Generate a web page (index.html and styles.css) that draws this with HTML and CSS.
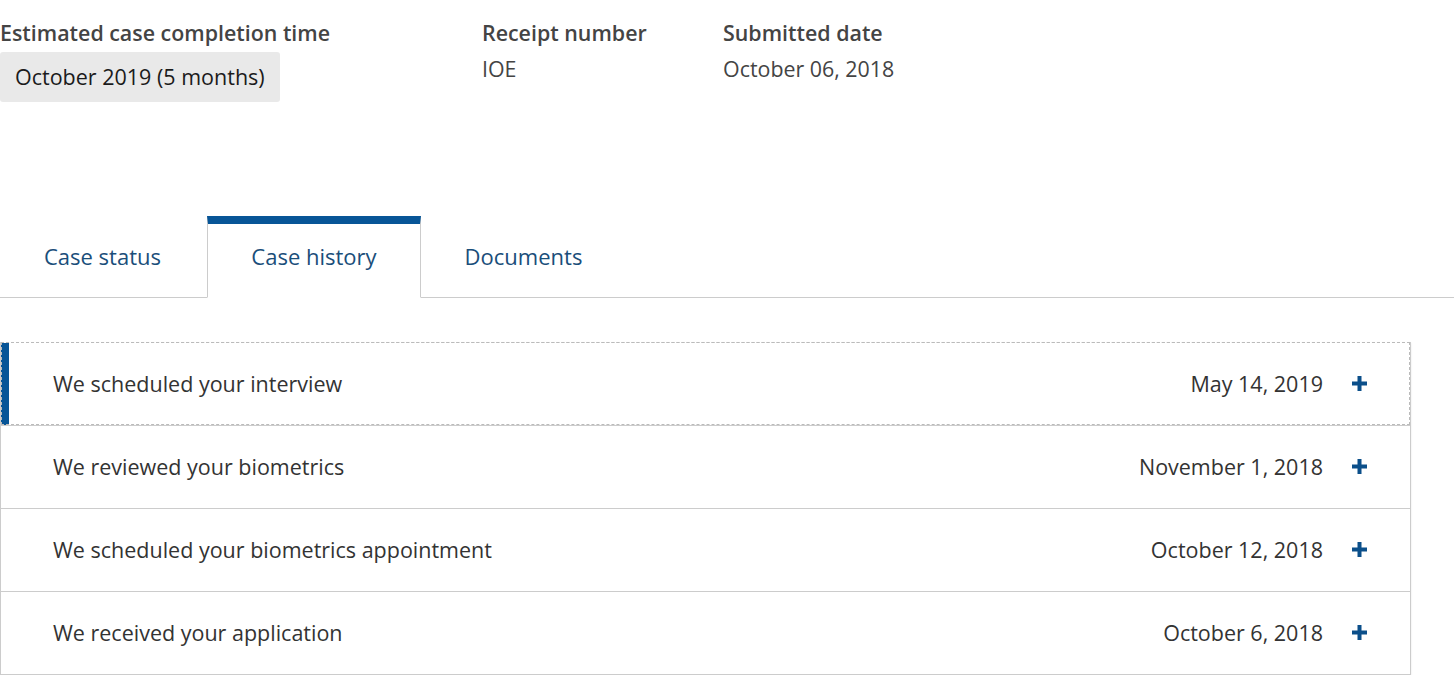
FILE: index.html
```html
<!DOCTYPE html>
<html lang="en">
<head>
    <meta charset="UTF-8">
    <meta name="viewport" content="width=device-width, initial-scale=1.0">
    <title>Case history</title>
    <link rel="stylesheet" href="styles.css">
</head>
<body>
    <div class="summary">
        <div class="field field-estimate">
            <div class="label">Estimated case completion time</div>
            <div class="estimate">October 2019 (5 months)</div>
        </div>
        <div class="field field-receipt">
            <div class="label">Receipt number</div>
            <div class="value">IOE</div>
        </div>
        <div class="field">
            <div class="label">Submitted date</div>
            <div class="value">October 06, 2018</div>
        </div>
    </div>

    <div class="tabs">
        <div class="tab">Case status</div>
        <div class="tab active">Case history</div>
        <div class="tab">Documents</div>
    </div>

    <div class="history">
        <div class="row current">
            <span class="title">We scheduled your interview</span>
            <span class="date">May 14, 2019</span>
            <span class="plus"><svg width="15" height="15" viewBox="0 0 15 15"><path d="M7.5 0v15M0 7.5h15" stroke="#0b4f8a" stroke-width="4"/></svg></span>
        </div>
        <div class="row">
            <span class="title">We reviewed your biometrics</span>
            <span class="date">November 1, 2018</span>
            <span class="plus"><svg width="15" height="15" viewBox="0 0 15 15"><path d="M7.5 0v15M0 7.5h15" stroke="#0b4f8a" stroke-width="4"/></svg></span>
        </div>
        <div class="row">
            <span class="title">We scheduled your biometrics appointment</span>
            <span class="date">October 12, 2018</span>
            <span class="plus"><svg width="15" height="15" viewBox="0 0 15 15"><path d="M7.5 0v15M0 7.5h15" stroke="#0b4f8a" stroke-width="4"/></svg></span>
        </div>
        <div class="row">
            <span class="title">We received your application</span>
            <span class="date">October 6, 2018</span>
            <span class="plus"><svg width="15" height="15" viewBox="0 0 15 15"><path d="M7.5 0v15M0 7.5h15" stroke="#0b4f8a" stroke-width="4"/></svg></span>
        </div>
    </div>
</body>
</html>
```

FILE: styles.css
```css
body {
    margin: 0;
    font-family: "Open Sans", "Lato", sans-serif;
    color: #333;
    background: #fff;
}

.summary {
    display: flex;
    padding-top: 20px;
}

.field-estimate {
    width: 482px;
}

.field-receipt {
    width: 241px;
}

.label {
    font-size: 21.4px;
    font-weight: 600;
    color: #444;
    line-height: 26px;
}

.value {
    font-size: 21.4px;
    color: #444;
    line-height: 26px;
    margin-top: 10px;
}

.estimate {
    display: inline-block;
    margin-top: 6px;
    background: #e9e9e9;
    border-radius: 3px;
    padding: 12px 15px;
    font-size: 21.5px;
    line-height: 26px;
    color: #1b1b1b;
}

.tabs {
    display: flex;
    margin-top: 114px;
    border-bottom: 1px solid #ccc;
}

.tab {
    height: 65px;
    padding-bottom: 8px;
    margin-top: 8px;
    line-height: 65px;
    text-align: center;
    font-size: 22px;
    color: #1a4e7a;
    width: 205px;
    margin-bottom: -1px;
}

.active {
    width: 212px;
    margin-left: 2px;
    margin-top: 0;
    border-top: 8px solid #075597;
    border-left: 1px solid #ccc;
    border-right: 1px solid #ccc;
    border-bottom: 1px solid #fff;
    background: #fff;
}

.history {
    margin-top: 44px;
    width: 1409px;
    border: 1px solid #ccc;
    border-top: none;
    box-shadow: 0 1px 2px rgba(0, 0, 0, 0.1);
}

.row {
    display: flex;
    align-items: center;
    border-top: 1px solid #ccc;
    padding-left: 52px;
    padding-bottom: 2px;
    box-sizing: border-box;
    height: 83px;
    font-size: 21.5px;
    color: #333;
}

.row.current {
    border-top: 1px dashed #bbb;
    box-shadow: inset 8px 0 0 #075597;
    outline: 1px dashed #bbb;
    outline-offset: -1px;
}

.title {
    flex: 1;
}

.date {
    color: #333;
}

.plus {
    display: flex;
    padding: 0 43px 0 29px;
}
```
